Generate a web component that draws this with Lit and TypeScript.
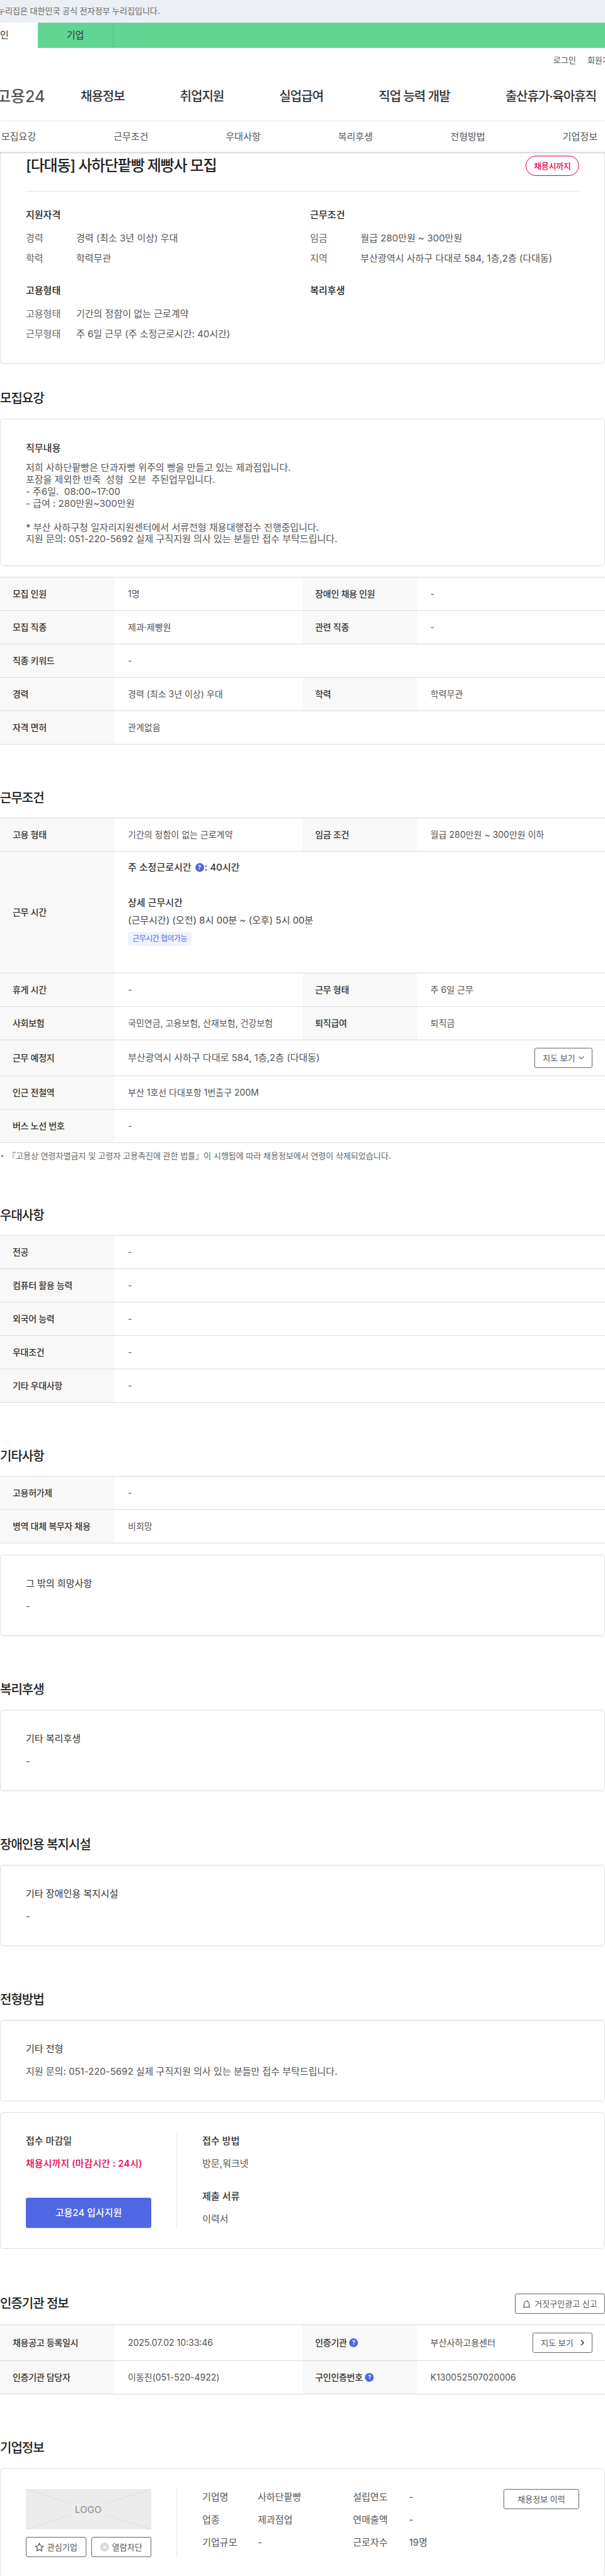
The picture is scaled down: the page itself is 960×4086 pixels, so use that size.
import {LitElement, css, html} from 'lit'
import {customElement} from 'lit/decorators.js'

const qmark = html`<span class="q">?</span>`

const row = (label: unknown, value: unknown, label2?: unknown, value2?: unknown, cls = '') => html`
  <div class="row ${cls}">
    <div class="th">${label}</div>
    <div class="td ${label2 ? '' : 'wide'}">${value}</div>
    ${label2 ? html`<div class="th">${label2}</div><div class="td">${value2}</div>` : ''}
  </div>
`

const box = (title: string, text: string) => html`
  <div class="card box">
    <h4>${title}</h4>
    <p>${text}</p>
  </div>
`

@customElement('app-root')
export class AppRoot extends LitElement {
  static styles = css`
    :host {
      display: block;
      width: 960px;
      overflow: hidden;
      background: #fff;
      color: #444;
      font-family: Inter, "Noto Sans CJK KR", "Noto Sans", sans-serif;
      font-size: 15px;
      line-height: 22px;
    }

    * {
      box-sizing: border-box;
    }

    h2, h3, h4, p {
      margin: 0;
      font-size: inherit;
    }

    .notice {
      height: 36px;
      background: #eceff4;
      color: #666;
      font-size: 13px;
      line-height: 35px;
      white-space: nowrap;
    }

    .notice span {
      display: block;
      margin-left: -4px;
    }

    .tabs {
      display: flex;
      height: 40px;
      margin-left: -60px;
      background: #61d592;
      color: #333;
      line-height: 40px;
      text-align: center;
    }

    .tabs div {
      width: 120px;
    }

    .tabs .on {
      background: #fff;
    }

    .tabs .off {
      border-right: 1px solid #55c284;
    }

    .util {
      display: flex;
      gap: 18px;
      height: 38px;
      padding-left: 878px;
      font-size: 13px;
      line-height: 39px;
      color: #555;
      white-space: nowrap;
    }

    .nav {
      display: flex;
      align-items: center;
      height: 78px;
      white-space: nowrap;
      color: #333;
    }

    .logo {
      width: 134px;
      margin-left: -6px;
      font-size: 25px;
      font-weight: 500;
      color: #555;
    }

    .menu {
      display: flex;
      gap: 88px;
      font-size: 20px;
      font-weight: 500;
      letter-spacing: -1px;
    }

    .subnav {
      position: relative;
      z-index: 1;
      display: flex;
      justify-content: space-between;
      align-items: center;
      height: 49px;
      padding: 0 12px 0 2px;
      background: #fff;
      border-top: 1px solid #eee;
      box-shadow: 0 1px 3px rgba(0, 0, 0, 0.25);
      color: #555;
      white-space: nowrap;
    }

    .card {
      border: 1px solid #ddd;
      border-radius: 6px;
      background: #fff;
    }

    .summary {
      height: 336px;
      padding: 0 40px;
      border-top: none;
      border-top-left-radius: 0;
      border-top-right-radius: 0;
    }

    .summary-head {
      display: flex;
      justify-content: space-between;
      align-items: center;
      height: 63px;
      padding-top: 6px;
      padding-bottom: 25px;
      border-bottom: 1px solid #e8e8e8;
    }

    .summary-head h2 {
      font-size: 24px;
      font-weight: 500;
      letter-spacing: -1.2px;
      color: #222;
    }

    .pill {
      width: 85px;
      height: 32px;
      border: 1px solid #e6004d;
      border-radius: 16px;
      color: #e6004d;
      font-size: 13px;
      font-weight: 500;
      line-height: 30px;
      text-align: center;
      letter-spacing: -0.3px;
    }

    .summary-grid {
      display: grid;
      grid-template-columns: 451px 1fr;
      row-gap: 29px;
      padding-top: 26px;
    }

    .summary-grid h3 {
      margin-bottom: 15px;
      font-weight: 500;
      color: #222;
    }

    .pair {
      display: grid;
      grid-template-columns: 80px 1fr;
      row-gap: 10px;
      color: #555;
    }

    .pair span:nth-child(odd) {
      color: #666;
    }

    .title {
      height: 28px;
      margin-top: 71px;
      font-size: 20px;
      font-weight: 500;
      letter-spacing: -1px;
      line-height: 28px;
      color: #222;
      white-space: nowrap;
    }

    .first-title {
      margin-top: 41px;
    }

    .title-row {
      display: flex;
      justify-content: space-between;
      align-items: center;
      height: 32px;
      margin-top: 71px;
    }

    .title-row .title {
      margin-top: 0;
    }

    .duty {
      height: 234px;
      margin-top: 18px;
      padding: 35px 40px 0;
    }

    .duty h4, .box h4 {
      font-weight: 500;
      color: #333;
    }

    .duty p {
      margin-top: 11px;
      line-height: 18.9px;
      color: #555;
      white-space: pre-wrap;
    }

    .box {
      height: 129px;
      margin-top: 18px;
      padding: 34px 40px 0;
    }

    .box h4 {
      font-weight: 400;
    }

    .box p {
      margin-top: 14px;
      color: #555;
    }

    .table {
      margin-top: 17px;
      border-top: 1px solid #ddd;
      font-size: 14px;
    }

    .row {
      display: grid;
      grid-template-columns: 182px 298px 182px 298px;
      height: 53px;
      border-bottom: 1px solid #ddd;
    }

    .row.tall {
      height: 57px;
    }

    .row.work {
      height: 193px;
    }

    .th {
      display: flex;
      align-items: center;
      gap: 4px;
      padding-left: 20px;
      background: #f8f8f8;
      font-weight: 500;
      letter-spacing: -0.3px;
      color: #333;
    }

    .td {
      display: flex;
      align-items: center;
      justify-content: space-between;
      padding: 0 20px 0 21px;
      color: #555;
    }

    .td.wide {
      grid-column: span 3;
    }

    .big {
      font-size: 15px;
    }

    .hours {
      display: block;
      padding-top: 14px;
      font-size: 15px;
      color: #444;
    }

    .hours b {
      display: flex;
      align-items: center;
      font-weight: 500;
      color: #333;
    }

    .hours .detail {
      margin-top: 34px;
    }

    .hours p {
      margin-top: 6px;
    }

    .chip {
      display: inline-block;
      width: 101px;
      height: 22px;
      margin-top: 7px;
      border-radius: 4px;
      background: #eff1fd;
      color: #4f67e3;
      font-size: 12px;
      letter-spacing: -0.6px;
      line-height: 22px;
      text-align: center;
    }

    .q {
      display: inline-block;
      width: 14px;
      height: 14px;
      border-radius: 50%;
      background: #4f67e3;
      color: #fff;
      font-size: 9px;
      font-weight: 700;
      letter-spacing: 0;
      line-height: 14px;
      text-align: center;
    }

    .hours .q {
      margin: 0 1px 0 6px;
    }

    .note {
      display: flex;
      align-items: center;
      gap: 7px;
      height: 20px;
      margin-top: 10px;
      margin-bottom: 3px;
      padding-left: 2px;
      font-size: 13px;
      color: #666;
      white-space: nowrap;
    }

    .note i {
      width: 3px;
      height: 3px;
      border-radius: 50%;
      background: #666;
    }

    .btn {
      display: inline-flex;
      align-items: center;
      justify-content: center;
      gap: 5px;
      height: 32px;
      border: 1px solid #666;
      border-radius: 3px;
      background: #fff;
      color: #555;
      font-size: 13px;
      white-space: nowrap;
    }

    .btn-map {
      width: 92px;
    }

    .btn-map2 {
      width: 95px;
      gap: 11px;
    }

    .btn-report {
      width: 143px;
      gap: 6px;
    }

    .apply {
      display: flex;
      height: 217px;
      margin-top: 17px;
      padding: 32px 40px;
    }

    .apply-left {
      display: flex;
      flex-direction: column;
      width: 199px;
      padding-top: 2px;
    }

    .sep {
      width: 1px;
      margin: 0 40px;
      background: #e8e8e8;
    }

    .apply b {
      font-weight: 500;
      color: #333;
    }

    .apply p {
      margin-top: 14px;
      color: #555;
    }

    .apply p.red {
      color: #e6004d;
      font-weight: 500;
    }

    .apply-right h4 {
      font-weight: 500;
      color: #333;
    }

    .apply-right {
      padding-top: 2px;
    }

    .apply-right h4 + p + h4 {
      margin-top: 30px;
    }

    .go {
      height: 48px;
      margin-top: auto;
      border-radius: 3px;
      background: #4f67e3;
      color: #fff;
      font-weight: 500;
      line-height: 48px;
      text-align: center;
    }

    .company {
      display: flex;
      height: 174px;
      margin-top: 18px;
      padding: 32px 40px;
    }

    .co-left {
      width: 199px;
    }

    .co-left svg.logo-box {
      display: block;
    }

    .co-btns {
      display: flex;
      gap: 8px;
      margin-top: 12px;
    }

    .co-btns .btn {
      flex: 1;
    }

    .info {
      display: grid;
      grid-template-columns: 88px 151px 89px 150px;
      grid-auto-rows: 22px;
      row-gap: 14px;
      padding-top: 2px;
      color: #555;
    }

    .btn-history {
      width: 120px;
      margin-left: auto;
    }
  `

  render() {
    return html`
      <div class="notice"><span>누리집은 대한민국 공식 전자정부 누리집입니다.</span></div>
      <div class="tabs">
        <div class="on">개인</div>
        <div class="off">기업</div>
      </div>
      <div class="util"><span>로그인</span><span>회원가입</span></div>
      <div class="nav">
        <div class="logo">고용24</div>
        <div class="menu">
          <span>채용정보</span><span>취업지원</span><span>실업급여</span><span>직업 능력 개발</span><span>출산휴가·육아휴직</span>
        </div>
      </div>
      <div class="subnav">
        <span>모집요강</span><span>근무조건</span><span>우대사항</span><span>복리후생</span><span>전형방법</span><span>기업정보</span>
      </div>

      <div class="card summary">
        <div class="summary-head">
          <h2>[다대동] 사하단팥빵 제빵사 모집</h2>
          <div class="pill">채용시까지</div>
        </div>
        <div class="summary-grid">
          <div>
            <h3>지원자격</h3>
            <div class="pair">
              <span>경력</span><span>경력 (최소 3년 이상) 우대</span>
              <span>학력</span><span>학력무관</span>
            </div>
          </div>
          <div>
            <h3>근무조건</h3>
            <div class="pair">
              <span>임금</span><span>월급 280만원 ~ 300만원</span>
              <span>지역</span><span>부산광역시 사하구 다대로 584, 1층,2층 (다대동)</span>
            </div>
          </div>
          <div>
            <h3>고용형태</h3>
            <div class="pair">
              <span>고용형태</span><span>기간의 정함이 없는 근로계약</span>
              <span>근무형태</span><span>주 6일 근무 (주 소정근로시간: 40시간)</span>
            </div>
          </div>
          <div>
            <h3>복리후생</h3>
          </div>
        </div>
      </div>

      <div class="title first-title">모집요강</div>
      <div class="card duty">
        <h4>직무내용</h4>
        <p>저희 사하단팥빵은 단과자빵 위주의 빵을 만들고 있는 제과점입니다.
포장을 제외한 반죽  성형  오븐  주된업무입니다.
- 주6일.  08:00~17:00
- 급여 : 280만원~300만원

* 부산 사하구청 일자리지원센터에서 서류전형 채용대행접수 진행중입니다.
지원 문의: 051-220-5692 실제 구직지원 의사 있는 분들만 접수 부탁드립니다.</p>
      </div>
      <div class="table">
        ${row('모집 인원', '1명', '장애인 채용 인원', '-')}
        ${row('모집 직종', '제과·제빵원', '관련 직종', '-')}
        ${row('직종 키워드', '-')}
        ${row('경력', '경력 (최소 3년 이상) 우대', '학력', '학력무관')}
        ${row('자격 면허', '관계없음')}
      </div>

      <div class="title">근무조건</div>
      <div class="table">
        ${row('고용 형태', '기간의 정함이 없는 근로계약', '임금 조건', '월급 280만원 ~ 300만원 이하')}
        <div class="row work">
          <div class="th">근무 시간</div>
          <div class="td wide hours">
            <b>주 소정근로시간 ${qmark}: 40시간</b>
            <b class="detail">상세 근무시간</b>
            <p>(근무시간) (오전) 8시 00분 ~ (오후) 5시 00분</p>
            <span class="chip">근무시간 협의가능</span>
          </div>
        </div>
        ${row('휴게 시간', '-', '근무 형태', '주 6일 근무')}
        ${row('사회보험', '국민연금, 고용보험, 산재보험, 건강보험', '퇴직급여', '퇴직금')}
        ${row('근무 예정지', html`
          <span class="big">부산광역시 사하구 다대로 584, 1층,2층 (다대동)</span>
          <span class="btn btn-map">지도 보기
            <svg width="9" height="6" viewBox="0 0 9 6" fill="none" stroke="#555" stroke-width="1.1"><path d="M.7 1l3.8 3.8L8.3 1"/></svg>
          </span>
        `, undefined, undefined, 'tall')}
        ${row('인근 전철역', '부산 1호선 다대포항 1번출구 200M')}
        ${row('버스 노선 번호', '-')}
      </div>
      <div class="note"><i></i><span>『고용상 연령차별금지 및 고령자 고용촉진에 관한 법률』이 시행됨에 따라 채용정보에서 연령이 삭제되었습니다.</span></div>

      <div class="title">우대사항</div>
      <div class="table">
        ${row('전공', '-')}
        ${row('컴퓨터 활용 능력', '-')}
        ${row('외국어 능력', '-')}
        ${row('우대조건', '-')}
        ${row('기타 우대사항', '-')}
      </div>

      <div class="title">기타사항</div>
      <div class="table">
        ${row('고용허가제', '-')}
        ${row('병역 대체 복무자 채용', '비희망')}
      </div>
      ${box('그 밖의 희망사항', '-')}

      <div class="title">복리후생</div>
      ${box('기타 복리후생', '-')}

      <div class="title">장애인용 복지시설</div>
      ${box('기타 장애인용 복지시설', '-')}

      <div class="title">전형방법</div>
      ${box('기타 전형', '지원 문의: 051-220-5692 실제 구직지원 의사 있는 분들만 접수 부탁드립니다.')}
      <div class="card apply">
        <div class="apply-left">
          <b>접수 마감일</b>
          <p class="red">채용시까지 (마감시간 : 24시)</p>
          <div class="go">고용24 입사지원</div>
        </div>
        <div class="sep"></div>
        <div class="apply-right">
          <h4>접수 방법</h4>
          <p>방문,워크넷</p>
          <h4>제출 서류</h4>
          <p>이력서</p>
        </div>
      </div>

      <div class="title-row">
        <div class="title">인증기관 정보</div>
        <span class="btn btn-report">
          <svg width="13" height="13" viewBox="0 0 13 13" fill="none" stroke="#444" stroke-width="1"><path d="M2.5 11.5V6a4 4 0 0 1 8 0v5.5M1 11.5h11M7.5 2V.8"/></svg>
          거짓구인광고 신고
        </span>
      </div>
      <div class="table">
        ${row('채용공고 등록일시', '2025.07.02 10:33:46', html`인증기관 ${qmark}`, html`
          <span>부산사하고용센터</span>
          <span class="btn btn-map2">지도 보기
            <svg width="6" height="10" viewBox="0 0 6 10" fill="none" stroke="#333" stroke-width="1.5"><path d="M1 1l4 4-4 4"/></svg>
          </span>
        `, 'tall')}
        ${row('인증기관 담당자', '이동진(051-520-4922)', html`구인인증번호 ${qmark}`, 'K130052507020006')}
      </div>

      <div class="title">기업정보</div>
      <div class="card company">
        <div class="co-left">
          <svg class="logo-box" width="199" height="64" viewBox="0 0 199 64">
            <rect width="199" height="64" fill="#ececec"/>
            <path d="M0 0l72 23M199 0l-72 23M0 64l72-23M199 64l-72-23" stroke="#ddd" fill="none"/>
            <text x="99" y="38" text-anchor="middle" fill="#999" font-size="15" font-weight="500" font-family="Inter, sans-serif">LOGO</text>
          </svg>
          <div class="co-btns">
            <span class="btn">
              <svg width="15" height="15" viewBox="0 0 15 15" fill="none" stroke="#444" stroke-width="1.1"><path d="M7.5 1.2l1.9 4.1 4.4.5-3.3 3 .9 4.4-3.9-2.2-3.9 2.2.9-4.4-3.3-3 4.4-.5z"/></svg>
              관심기업
            </span>
            <span class="btn">
              <svg width="14" height="14" viewBox="0 0 14 14"><circle cx="7" cy="7" r="7" fill="#d8d8d8"/><path d="M4.5 4.5l5 5M9.5 4.5l-5 5" stroke="#fff" stroke-width="1.4"/></svg>
              열람차단
            </span>
          </div>
        </div>
        <div class="sep"></div>
        <div class="info">
          <span>기업명</span><span>사하단팥빵</span><span>설립연도</span><span>-</span>
          <span>업종</span><span>제과점업</span><span>연매출액</span><span>-</span>
          <span>기업규모</span><span>-</span><span>근로자수</span><span>19명</span>
        </div>
        <span class="btn btn-history">채용정보 이력</span>
      </div>
    `
  }
}
